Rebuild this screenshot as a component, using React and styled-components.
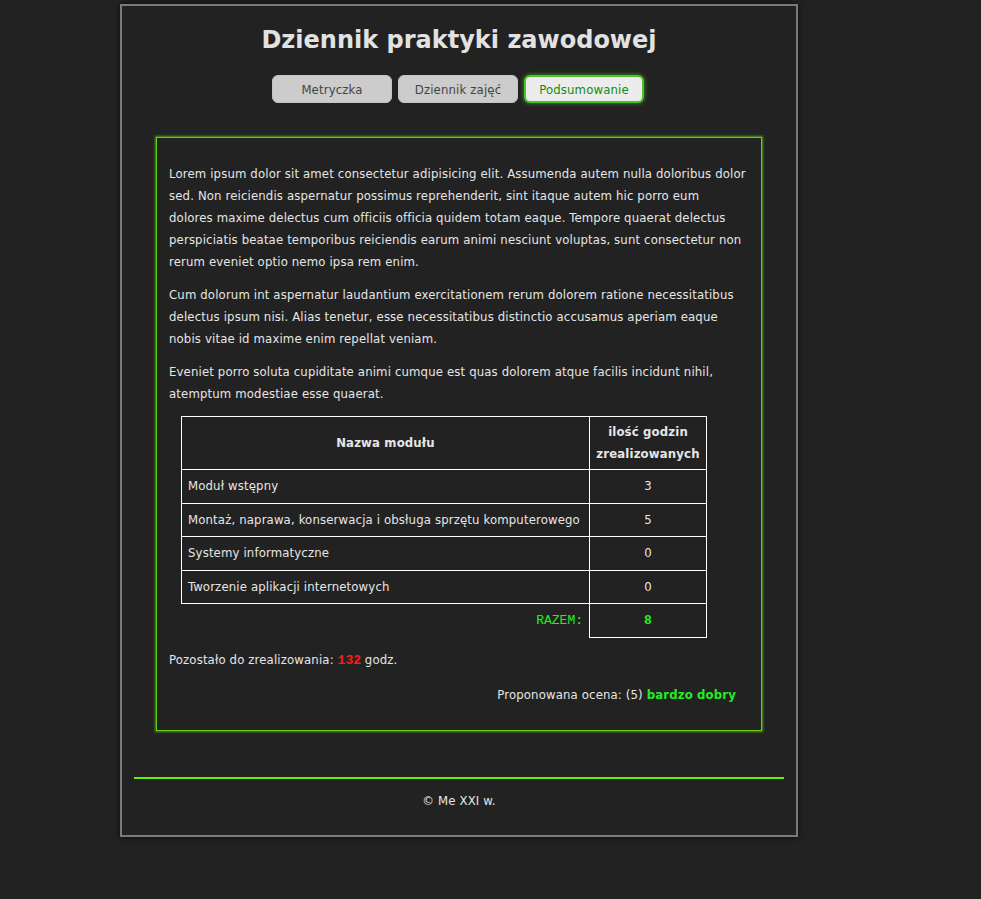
import React from "react";
import styled, { createGlobalStyle } from "styled-components";

const Global = createGlobalStyle`
  html, body { margin: 0; padding: 0; background: #222222; }
  body {
    font-family: Tahoma, "DejaVu Sans Condensed", "DejaVu Sans", sans-serif;
    font-stretch: condensed;
    font-size: 13px;
    letter-spacing: 0.15px;
    color: #e6e6e6;
  }
`;

const Page = styled.div`
  padding: 4px 0 0 120px;
  min-height: 895px;
`;

const Container = styled.div`
  width: 678px;
  box-sizing: border-box;
  border: 2px solid #7a7a7a;
  box-shadow: 0 0 6px rgba(0, 0, 0, 0.7);
  padding: 0 12px;
`;

const Title = styled.h1`
  margin: 0;
  padding-top: 18px;
  text-align: center;
  font-family: "DejaVu Sans", Verdana, sans-serif;
  font-stretch: normal;
  letter-spacing: 0;
  font-weight: bold;
  font-size: 24px;
  line-height: 32px;
  color: #e2e2e2;
`;

const Nav = styled.nav`
  display: flex;
  justify-content: center;
  gap: 6px;
  margin-top: 19px;
  padding-right: 2px;
`;

const NavButton = styled.button`
  width: 120px;
  height: 28px;
  box-sizing: border-box;
  border-radius: 6px;
  font-family: inherit;
  font-stretch: condensed;
  letter-spacing: 0.15px;
  font-size: 13px;
  cursor: pointer;
  background: ${(p) => (p.$active ? "#ececec" : "#cccccc")};
  color: ${(p) => (p.$active ? "#138a13" : "#444444")};
  border: ${(p) => (p.$active ? "2px solid #4fbf2f" : "1px solid #c4c4c4")};
  box-shadow: ${(p) => (p.$active ? "0 0 4px #3fa51f" : "none")};
`;

const Card = styled.section`
  margin: 34px 22px 0 22px;
  border: 1px solid #66d014;
  box-shadow: 0 0 2px 1px #4a9c10;
  padding: 14px 15px 24px 12px;
`;

const Para = styled.p`
  margin: 11px 0;
  line-height: 22px;
`;

const Table = styled.table`
  border-collapse: collapse;
  margin: 10px 0 0 12px;
  width: 526px;
`;

const Th = styled.th`
  border: 1px solid #ffffff;
  padding: 4px 6px;
  font-weight: bold;
  line-height: 22px;
  height: 44px;
  text-align: center;
  color: #e6e6e6;
`;

const Td = styled.td`
  border: ${(p) => (p.$noBorder ? "none" : "1px solid #ffffff")};
  padding: 0 6px;
  height: 32.5px;
  line-height: 22px;
  text-align: ${(p) => p.$align || "left"};
`;

const Mono = styled.span`
  font-family: "Liberation Mono", "Courier New", monospace;
  font-stretch: normal;
  letter-spacing: 0;
  color: ${(p) => p.$color || "inherit"};
  font-weight: ${(p) => (p.$bold ? "bold" : "normal")};
`;

const Line = styled.p`
  margin: ${(p) => p.$mt || 13}px 0 0 0;
  line-height: 22px;
  text-align: ${(p) => p.$align || "left"};
  padding-right: ${(p) => p.$pr || 0}px;
`;

const Strong = styled.b`
  color: #22ee22;
`;

const Footer = styled.footer`
  margin-top: 46px;
  border-top: 2px solid #66ee00;
  text-align: center;
  padding: 11px 0 23px 0;
  line-height: 22px;
`;

const rows = [
  ["Moduł wstępny", 3],
  ["Montaż, naprawa, konserwacja i obsługa sprzętu komputerowego", 5],
  ["Systemy informatyczne", 0],
  ["Tworzenie aplikacji internetowych", 0],
];

export default function App() {
  return (
    <>
      <Global />
      <Page>
        <Container>
          <Title>Dziennik praktyki zawodowej</Title>
          <Nav>
            <NavButton>Metryczka</NavButton>
            <NavButton>Dziennik zajęć</NavButton>
            <NavButton $active>Podsumowanie</NavButton>
          </Nav>
          <Card>
            <Para>
              Lorem ipsum dolor sit amet consectetur adipisicing elit. Assumenda autem nulla doloribus dolor
              sed. Non reiciendis aspernatur possimus reprehenderit, sint itaque autem hic porro eum dolores
              maxime delectus cum officiis officia quidem totam eaque. Tempore quaerat delectus perspiciatis
              beatae temporibus reiciendis earum animi nesciunt voluptas, sunt consectetur non rerum eveniet
              optio nemo ipsa rem enim.
            </Para>
            <Para>
              Cum dolorum int aspernatur laudantium exercitationem rerum dolorem ratione necessitatibus
              delectus ipsum nisi. Alias tenetur, esse necessitatibus distinctio accusamus aperiam eaque
              nobis vitae id maxime enim repellat veniam.
            </Para>
            <Para>
              Eveniet porro soluta cupiditate animi cumque est quas dolorem atque facilis incidunt nihil,
              atemptum modestiae esse quaerat.
            </Para>
            <Table>
              <thead>
                <tr>
                  <Th>Nazwa modułu</Th>
                  <Th style={{ width: 104 }}>ilość godzin zrealizowanych</Th>
                </tr>
              </thead>
              <tbody>
                {rows.map(([name, h]) => (
                  <tr key={name}>
                    <Td>{name}</Td>
                    <Td $align="center">{h}</Td>
                  </tr>
                ))}
                <tr>
                  <Td $noBorder $align="right">
                    <Mono $color="#22ee22">RAZEM:</Mono>
                  </Td>
                  <Td $align="center">
                    <Mono $color="#22ee22" $bold>8</Mono>
                  </Td>
                </tr>
              </tbody>
            </Table>
            <Line $mt={11}>
              Pozostało do zrealizowania: <Mono $color="#ff1a1a" $bold>132</Mono> godz.
            </Line>
            <Line $align="right" $pr={10} $mt={12}>
              Proponowana ocena: (5) <Strong>bardzo dobry</Strong>
            </Line>
          </Card>
          <Footer>© Me XXI w.</Footer>
        </Container>
      </Page>
    </>
  );
}
